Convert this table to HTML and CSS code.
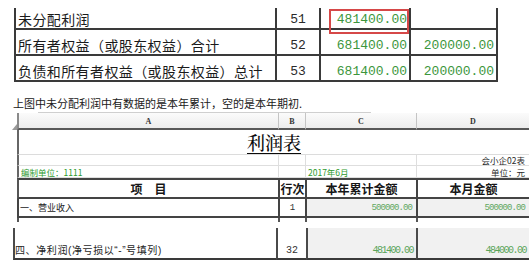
FILE: index.html
```html
<!DOCTYPE html>
<html lang="zh-CN">
<head>
<meta charset="utf-8">
<title>利润表</title>
<link rel="stylesheet" href="styles.css">
</head>
<body>
<section class="s1">
  <div class="s1-row r1">
    <div class="lbl">未分配利润</div>
    <div class="no">51</div>
    <div class="amt hl">481400.00<span class="redbox"></span></div>
    <div class="amt"></div>
  </div>
  <div class="s1-row r2">
    <div class="lbl">所有者权益（或股东权益）合计</div>
    <div class="no">52</div>
    <div class="amt">681400.00</div>
    <div class="amt">200000.00</div>
  </div>
  <div class="s1-row r3">
    <div class="lbl">负债和所有者权益（或股东权益）总计</div>
    <div class="no">53</div>
    <div class="amt">681400.00</div>
    <div class="amt">200000.00</div>
  </div>
</section>

<p class="caption">上图中未分配利润中有数据的是本年累计，空的是本年期初.</p>
<div class="rule"></div>

<section class="s2">
  <div class="s2-row colhdr">
    <div class="corner"><svg width="5" height="7" viewBox="0 0 5 7"><path d="M0 7 L5 1 L5 7 Z" fill="#9a9a9a"/></svg></div>
    <div class="ch a">A</div>
    <div class="ch">B</div>
    <div class="ch">C</div>
    <div class="ch">D</div>
  </div>
  <div class="s2-row title-row">
    <div class="corner"></div>
    <div class="title"><span>利润表</span></div>
  </div>
  <div class="s2-row meta m1">
    <div class="corner"></div>
    <div class="a"></div>
    <div></div>
    <div></div>
    <div class="r">会小企02表</div>
  </div>
  <div class="s2-row meta m2">
    <div class="corner"></div>
    <div class="a green">编制单位：1111</div>
    <div></div>
    <div class="green">2017年6月</div>
    <div class="r">单位：元</div>
  </div>
  <div class="s2-row head">
    <div class="corner"></div>
    <div class="a">项　目</div>
    <div>行次</div>
    <div>本年累计金额</div>
    <div>本月金额</div>
  </div>
  <div class="s2-row data">
    <div class="corner"></div>
    <div class="a lbl2">一、营业收入</div>
    <div class="no2">1</div>
    <div class="amt2">500000.00</div>
    <div class="amt2">500000.00</div>
  </div>
  <div class="s2-row stub">
    <div class="corner"></div>
    <div class="a"></div>
    <div></div>
    <div></div>
    <div></div>
  </div>
</section>

<section class="s3">
  <div class="lbl3">四、净利润(净亏损以“-”号填列)</div>
  <div class="no3">32</div>
  <div class="amt3">481400.00</div>
  <div class="amt3">484000.00</div>
</section>
</body>
</html>
```

FILE: styles.css
```css
html, body {
  margin: 0;
  padding: 0;
  background: #ffffff;
}
body {
  width: 529px;
  height: 261px;
  overflow: hidden;
  font-family: "Noto Sans CJK SC", "Liberation Sans", sans-serif;
  color: #1e1e1e;
}

/* ---------- top snippet ---------- */
.s1 {
  margin: 8px 0 0 14px;
  width: 484px;
}
.s1-row {
  display: grid;
  grid-template-columns: 261px 44px 90px 89px;
}
.s1-row > div {
  box-sizing: border-box;
  border-left: 2px solid #3a3a3a;
  border-bottom: 2px solid #3a3a3a;
  display: flex;
  align-items: flex-end;
  padding-bottom: 2px;
  position: relative;
}
.s1-row > div:last-child {
  border-right: 2px solid #3a3a3a;
}
.r1 { height: 22px; }
.r2, .r3 { height: 26px; }

.lbl {
  font-size: 14px;
  line-height: 14px;
  letter-spacing: 0.4px;
  padding-left: 2px;
  color: #1a1a1a;
}
.no {
  justify-content: center;
  font-family: "Liberation Mono", monospace;
  font-size: 13px;
  line-height: 13px;
  color: #2a2a2a;
}
.amt {
  justify-content: flex-end;
  padding-right: 2px;
  font-family: "Liberation Mono", monospace;
  font-size: 13px;
  line-height: 13px;
  color: #3c963c;
}
.redbox {
  position: absolute;
  left: 8px;
  top: 1px;
  width: 80px;
  height: 25px;
  box-sizing: border-box;
  border: 2px solid #d64848;
}

/* ---------- caption ---------- */
.caption {
  margin: 14px 0 0 13px;
  font-size: 11px;
  line-height: 14px;
  height: 14px;
  color: #202020;
  white-space: nowrap;
}
.rule {
  margin: 2px 0 0 38px;
  width: 333px;
  height: 0;
  border-top: 1px solid #cfcfcf;
}

/* ---------- excel sheet ---------- */
.s2 {
  margin-left: 12px;
  width: 517px;
}
.s2-row {
  display: grid;
  grid-template-columns: 5px 261px 27px 111px 113px;
}
.s2-row > div {
  box-sizing: border-box;
  display: flex;
  align-items: center;
  white-space: nowrap;
}
.corner {
  align-items: flex-end !important;
}

.colhdr {
  height: 17px;
}
.colhdr .ch {
  justify-content: center;
  background: linear-gradient(#fbfbfb, #ececec);
  border-left: 1px solid #c4c4c4;
  border-bottom: 2px solid #585858;
  font-family: "Liberation Serif", serif;
  font-weight: bold;
  font-size: 8px;
  color: #333;
  padding-top: 1px;
}
.colhdr .ch.a {
  border-left: 2px solid #8a8a8a;
}

.title-row {
  height: 25px;
}
.title {
  grid-column: 2 / 6;
  justify-content: center;
  border-left: 2px solid #666;
  border-bottom: 1px solid #dcdcdc;
  font-family: "Noto Serif CJK SC", "Noto Sans CJK SC", serif;
  font-size: 18px;
  font-weight: 500;
  line-height: 20px;
  color: #0a0a0a;
}
.title span {
  text-decoration: underline;
  text-decoration-thickness: 1px;
  text-underline-offset: 3px;
}

.meta > div {
  border-left: 1px solid #dedede;
  border-bottom: 1px solid #dedede;
  font-size: 8.5px;
  line-height: 10px;
  color: #2a2a2a;
}
.meta > div.corner {
  border: none;
}
.meta > div.a {
  border-left: 2px solid #666;
}
.meta .r {
  justify-content: flex-end;
  padding-right: 4px;
}
.meta .green {
  color: #2e9a2e;
  padding-left: 2px;
}
.m1 { height: 11px; }
.m2 { height: 12px; }

.head {
  height: 21px;
}
.head > div {
  justify-content: center;
  border-left: 2px solid #444;
  border-top: 2px solid #444;
  border-bottom: 2px solid #444;
  font-size: 12px;
  font-weight: bold;
  line-height: 14px;
  color: #161616;
  padding-top: 1px;
}
.head > div.corner {
  border: none;
}
.head > div.a {
  border-left: 2px solid #555;
}

.data {
  height: 19px;
}
.data > div {
  border-left: 2px solid #444;
  border-bottom: 2px solid #444;
}
.data > div.corner {
  border: none;
}
.lbl2 {
  font-size: 9px;
  line-height: 10px;
  padding-left: 1px;
  color: #222;
}
.no2 {
  justify-content: center;
  font-family: "Liberation Mono", monospace;
  font-size: 9px;
  color: #333;
}
.amt2 {
  justify-content: flex-end;
  padding-right: 4px;
  background: #f1f1f1;
  font-family: "Liberation Mono", monospace;
  font-size: 9px;
  letter-spacing: -0.9px;
  color: #62a862;
}

.stub {
  height: 4px;
}
.stub > div {
  border-left: 2px solid #555;
}
.stub > div.corner {
  border: none;
}

/* ---------- lower snippet ---------- */
.s3 {
  margin: 6px 0 0 13px;
  width: 516px;
  height: 32px;
  display: grid;
  grid-template-columns: 263px 30px 110px 113px;
}
.s3 > div {
  box-sizing: border-box;
  border-left: 2px solid #4a4a4a;
  border-bottom: 2px solid #3a3a3a;
  display: flex;
  align-items: flex-end;
  padding-bottom: 1px;
  white-space: nowrap;
}
.lbl3 {
  font-family: "Liberation Sans", "Noto Sans CJK SC", sans-serif;
  font-size: 10px;
  line-height: 12px;
  letter-spacing: 0.6px;
  color: #1e1e1e;
}
.no3 {
  justify-content: center;
  font-family: "Liberation Mono", monospace;
  font-size: 10px;
  line-height: 12px;
  color: #333;
}
.amt3 {
  justify-content: flex-end;
  padding-right: 3px;
  background: #f1f1f1;
  font-family: "Liberation Mono", monospace;
  font-size: 10px;
  line-height: 12px;
  letter-spacing: -1.5px;
  color: #5aa55a;
}
```
